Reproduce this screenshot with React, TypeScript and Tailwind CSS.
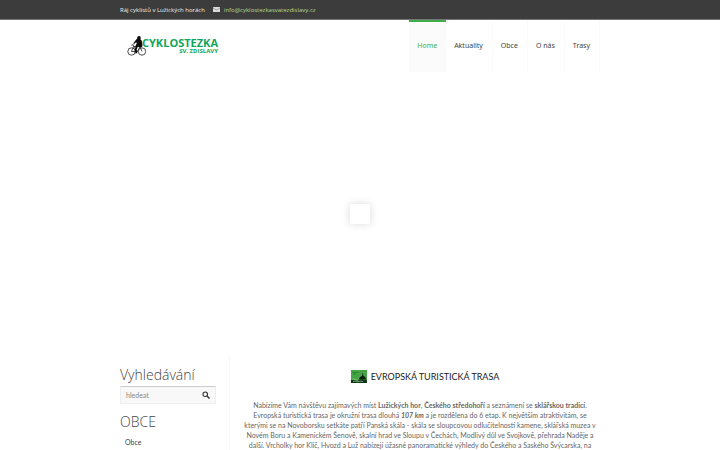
import type { ReactNode } from 'react';

const NAV = [
  { label: 'Home', href: '#home', active: true },
  { label: 'Aktuality', href: '#aktuality' },
  { label: 'Obce', href: '#obce' },
  { label: 'O nás', href: '#o-nas' },
  { label: 'Trasy', href: '#trasy' },
];

function Container({ children, className = '' }: { children: ReactNode; className?: string }) {
  return <div className={`mx-auto w-2/3 ${className}`}>{children}</div>;
}

function Logo() {
  return (
    <svg className="h-6 w-[92px]" viewBox="0 0 92 24" role="img" aria-label="Cyklostezka sv. Zdislavy">
      {/* bicycle */}
      <g fill="none" stroke="#222" strokeWidth="0.8">
        <circle cx="4.5" cy="16.5" r="3.7" />
        <circle cx="15" cy="16.5" r="3.7" />
        <path d="M4.5 16.5 6.5 11.5h6.5l2 5M6.5 11.5l4 5 2.5-5M4.5 16.5h6M6.2 9.6l-2 .6M6.2 9.6l.4 2" />
      </g>
      {/* rider */}
      <path
        d="M10.8 1.600c1.400-1.200 3.200-.2 2.900 1.400l-.3 1.200c1.500 1 2.200 3.600 2 7.200l-2.200 1-2.300-.8-1.300 3.200.8 3.200-2 .4-.6-3.600 1-4.600.9-1.600-.5-1.600-2 2-1-.6 2.200-3 1.800-1.800c.2-1-.1-1.600.6-2z"
        fill="#0a0a0a"
      />
      <g fill="#12a55c" fontFamily="'Open Sans', 'Noto Sans', sans-serif" fontWeight="700" textAnchor="end">
        <text x="91" y="12" fontSize="11">CYKLOSTEZKA</text>
        <text x="91" y="18" fontSize="6">SV. ZDISLAVY</text>
      </g>
    </svg>
  );
}

function RouteBadge() {
  return (
    <svg className="h-[13px] w-4" viewBox="0 0 16 13" aria-hidden="true">
      <rect width="16" height="13" fill="#45a545" />
      <path d="M1.5 2.5h6M2 4h3" stroke="#267a2b" strokeWidth="0.8" />
      <path d="M0 10c2-1 4 .5 6 .5s3-1.500 5-1 3 .5 5 .3V13H0z" fill="#15351a" />
      <path d="M8 9.500c0-2 1.500-3 3-3.500l.7-3.500.7 3.500c1.500.5 2.600 1.500 2.600 3.500z" fill="#0c1c0e" />
      <path d="M1 9.500c2-1.500 4 1 6 .6M2 11.500c2-.8 3 .5 5 .2s3-.8 5 0" stroke="#8fd08f" strokeWidth="0.700" fill="none" />
    </svg>
  );
}

export default function App() {
  return (
    <div className="h-screen overflow-hidden bg-white font-['Lato',sans-serif] text-[#666]">
      <div className="border-b border-[#777] bg-[#3c3c3c]">
        <Container className="flex h-[19px] items-center gap-2 font-['Open_Sans',sans-serif] text-[6px] leading-[10px]">
          <span className="text-[#eee]">Ráj cyklistů v Lužických horách</span>
          <a href="mailto:info@cyklostezkasvatezdislavy.cz" className="flex items-center gap-1 text-[#b5dc8c]">
            <svg className="h-[5px] w-[7px]" viewBox="0 0 14 10" aria-hidden="true">
              <rect width="14" height="10" rx="1" fill="#ddd" />
              <path d="m0 2 7 4 7-4" fill="none" stroke="#777" strokeWidth="1.200" />
            </svg>
            info@cyklostezkasvatezdislavy.cz
          </a>
        </Container>
      </div>

      <header>
        <Container className="flex items-start justify-between">
          <a href="#home" className="mt-[15px] ml-[7px]">
            <Logo />
          </a>
          <nav className="flex font-['Noto_Sans',sans-serif] text-[7px] leading-[10px]">
            {NAV.map((item) => (
              <a
                key={item.label}
                href={item.href}
                className={
                  item.active
                    ? 'h-[52px] border-t-2 border-[#3fae49] bg-[#fbfbfb] pt-[19px] pr-[9px] pl-2 text-[#3fae49]'
                    : 'h-[52px] border-r border-[#fafafa] pt-[21px] pr-[9px] pl-2 text-[#444]'
                }
              >
                {item.label}
              </a>
            ))}
          </nav>
        </Container>
      </header>

      {/* Slider area with its preloader */}
      <section className="flex h-[284px] items-center justify-center">
        <div className="size-5 bg-white shadow-[0_0_8px_rgba(0,0,0,0.15)]" />
      </section>

      <Container className="flex">
        <aside className="w-[110px] shrink-0 border-r border-[#f8f8f8] pt-[9px] pr-[13px] text-[#444]">
          <h3 className="font-['Open_Sans',sans-serif] text-[14px] leading-[20px] font-light">Vyhledávání</h3>
          <form className="mt-[1px] flex h-[18px] items-center border border-[#eee] border-t-[#ccc] bg-[#f8f8f8] px-[5px]">
            <input
              type="text"
              aria-label="Vyhledávání"
              placeholder="hledeat"
              className="min-w-0 flex-1 bg-transparent text-[7px] leading-[10px] outline-none placeholder:text-[#888]"
            />
            <button type="button" aria-label="Hledat">
              <svg className="size-2" viewBox="0 0 16 16" fill="none" stroke="#333" aria-hidden="true">
                <circle cx="6.5" cy="6.5" r="4.5" strokeWidth="2.200" />
                <path d="m10 10 5 5" strokeWidth="3" />
              </svg>
            </button>
          </form>
          <h3 className="mt-2 font-['Open_Sans',sans-serif] text-[14px] leading-[20px] font-light">OBCE</h3>
          <a href="#obce" className="mt-[5px] block pl-[5px] text-[7px] leading-[10px]">
            Obce
          </a>
        </aside>

        <main className="flex-1 pt-[14px] pl-[10px]">
          <h1 className="flex items-center justify-center gap-1 pl-[10px] text-[9px] leading-[13px] font-normal text-[#222]">
            <RouteBadge />
            EVROPSKÁ TURISTICKÁ TRASA
          </h1>
          <p className="mt-[17px] text-center text-[7px] leading-[10px] whitespace-nowrap">
            Nabízíme Vám návštěvu zajímavých míst <b>Lužických hor</b>, <b>Českého středohoří</b> a seznámení se{' '}
            <b>sklářskou tradicí</b>.<br />
            Evropská turistická trasa je okružní trasa dlouhá <b><i>107 km</i></b> a je rozdělena do 6 etap. K největším atraktivitám, se<br />
            kterými se na Novoborsku setkáte patří Panská skála - skála se sloupcovou odlučitelností kamene, sklářská muzea v<br />
            Novém Boru a Kamenickém Šenově, skalní hrad ve Sloupu v Čechách, Modlivý důl ve Svojkově, přehrada Naděje a<br />
            další. Vrcholky hor Klíč, Hvozd a Luž nabízejí úžasné panoramatické výhledy do Českého a Saského Švýcarska, na
          </p>
        </main>
      </Container>
    </div>
  );
}
